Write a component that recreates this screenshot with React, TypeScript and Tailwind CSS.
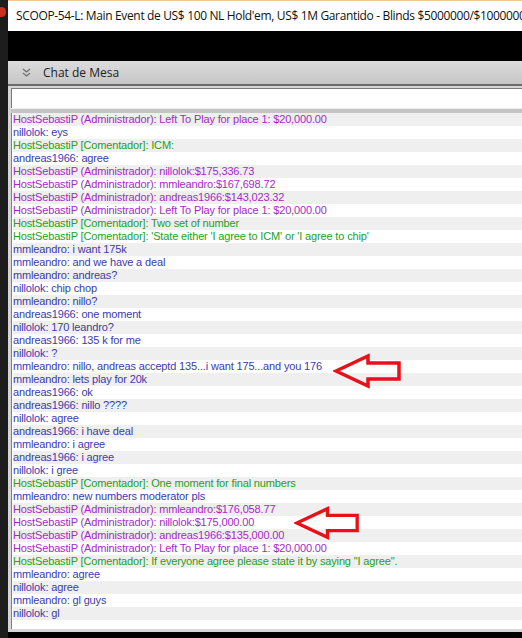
import React from "react";

type Kind = "admin" | "mod" | "user";

const lines: [Kind, string][] = [
  ["admin", "HostSebastiP (Administrador): Left To Play for place 1: $20,000.00"],
  ["user", "nillolok: eys"],
  ["mod", "HostSebastiP [Comentador]: ICM:"],
  ["user", "andreas1966: agree"],
  ["admin", "HostSebastiP (Administrador): nillolok:$175,336.73"],
  ["admin", "HostSebastiP (Administrador): mmleandro:$167,698.72"],
  ["admin", "HostSebastiP (Administrador): andreas1966:$143,023.32"],
  ["admin", "HostSebastiP (Administrador): Left To Play for place 1: $20,000.00"],
  ["mod", "HostSebastiP [Comentador]: Two set of number"],
  ["mod", "HostSebastiP [Comentador]: 'State either 'I agree to ICM' or 'I agree to chip'"],
  ["user", "mmleandro: i want 175k"],
  ["user", "mmleandro: and we have a deal"],
  ["user", "mmleandro: andreas?"],
  ["user", "nillolok: chip chop"],
  ["user", "mmleandro: nillo?"],
  ["user", "andreas1966: one moment"],
  ["user", "nillolok: 170 leandro?"],
  ["user", "andreas1966: 135 k for me"],
  ["user", "nillolok: ?"],
  ["user", "mmleandro: nillo, andreas acceptd 135...i want 175...and you 176"],
  ["user", "mmleandro: lets play for 20k"],
  ["user", "andreas1966: ok"],
  ["user", "andreas1966: nillo ????"],
  ["user", "nillolok: agree"],
  ["user", "andreas1966: i have deal"],
  ["user", "mmleandro: i agree"],
  ["user", "andreas1966: i agree"],
  ["user", "nillolok: i gree"],
  ["mod", "HostSebastiP [Comentador]: One moment for final numbers"],
  ["user", "mmleandro: new numbers moderator pls"],
  ["admin", "HostSebastiP (Administrador): mmleandro:$176,058.77"],
  ["admin", "HostSebastiP (Administrador): nillolok:$175,000.00"],
  ["admin", "HostSebastiP (Administrador): andreas1966:$135,000.00"],
  ["admin", "HostSebastiP (Administrador): Left To Play for place 1: $20,000.00"],
  ["mod", 'HostSebastiP [Comentador]: If everyone agree please state it by saying "I agree".'],
  ["user", "mmleandro: agree"],
  ["user", "nillolok: agree"],
  ["user", "mmleandro: gl guys"],
  ["user", "nillolok: gl"],
];

const colour: Record<Kind, string> = {
  admin: "text-[#a52ac4]",
  mod: "text-[#23a023]",
  user: "text-[#3b3bab]",
};

function Arrow({ className }: { className: string }) {
  return (
    <svg className={className} viewBox="0 0 70 36" fill="none">
      <path
        d="M3 18 L35 3 L35 10 L66 10 L66 26 L35 26 L35 33 Z"
        stroke="#e8111a"
        strokeWidth="3.5"
        strokeLinejoin="miter"
      />
    </svg>
  );
}

export default function App() {
  return (
    <div className="relative flex h-[638px] w-[522px] overflow-hidden bg-black">
      {/* left edge of the desktop behind the window */}
      <div className="relative w-[8px] shrink-0 bg-[#1d1d1d]">
        <div className="absolute -left-[3px] top-[7px] h-[10px] w-[9px] rounded-full bg-[#c8321e]" />
      </div>

      <div className="flex min-w-0 flex-1 flex-col">
        <div className="flex h-[31px] shrink-0 items-center overflow-hidden border-t border-[#ecc896] bg-white pl-[8px] font-['Open_Sans',sans-serif] text-[12px] tracking-[-0.35px] whitespace-nowrap text-[#111]">
          SCOOP-54-L: Main Event de US$ 100 NL Hold'em, US$ 1M Garantido - Blinds $5000000/$1000000
        </div>
        <div className="h-[30px] shrink-0 bg-black" />

        <div className="flex h-[25px] shrink-0 items-center border-b-2 border-[#6b6b6b] bg-gradient-to-b from-[#dcdcdc] to-[#c6c6c6] pl-[14px] font-['Open_Sans',sans-serif] text-[12px] text-[#222]">
          <svg width="9" height="9" viewBox="0 0 9 9" fill="none" stroke="#6e6e6e" strokeWidth="1.2">
            <path d="M1 1 L4.5 4 L8 1" />
            <path d="M1 5 L4.5 8 L8 5" />
          </svg>
          <span className="ml-[12px]">Chat de Mesa</span>
        </div>

        <div className="flex flex-1 flex-col bg-[#d6d6d6] pl-[3px] pb-[3px]">
          <div className="mt-[2px] h-[20px] shrink-0 border-t border-l border-[#7a7a7a] bg-white" />
          <div className="h-[5px] shrink-0 border-t border-[#ededed] bg-[#c4c4c4]" />
          <div className="flex-1 border-l border-[#808080] bg-white pl-[1px] font-['Liberation_Sans',Arial,sans-serif] text-[11px] tracking-[-0.15px]">
            {lines.map(([kind, text], i) => (
              <div
                key={i}
                className={`h-[13px] whitespace-nowrap leading-[13px] ${i % 2 === 0 ? "bg-[#efefef]" : "bg-white"} ${colour[kind]}`}
              >
                {text}
              </div>
            ))}
          </div>
        </div>
        <div className="h-[6px] shrink-0 bg-black" />
      </div>

      <Arrow className="absolute left-[333px] top-[353px] h-[36px] w-[70px]" />
      <Arrow className="absolute left-[294px] top-[505px] h-[36px] w-[67px]" />
    </div>
  );
}
